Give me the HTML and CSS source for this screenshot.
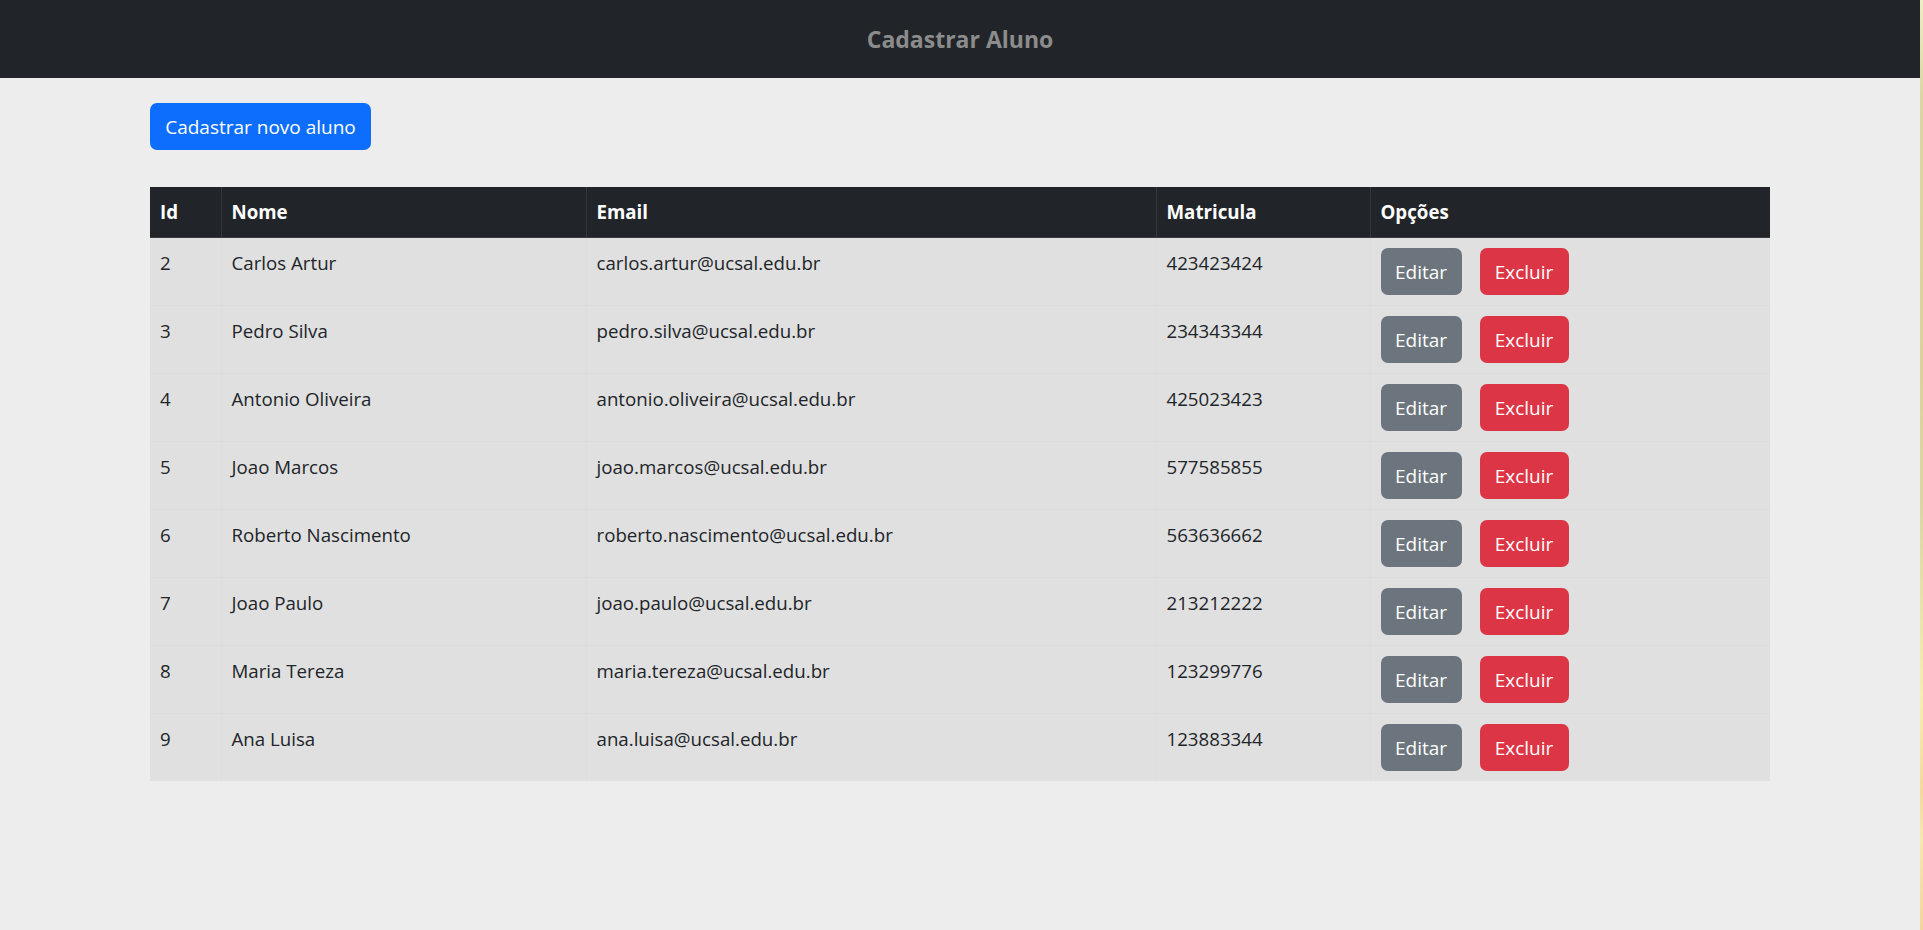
FILE: index.html
```html
<!DOCTYPE html>
<html lang="pt-BR">
<head>
<meta charset="utf-8">
<title>Cadastrar Aluno</title>
<link rel="stylesheet" href="styles.css">
</head>
<body>
<div class="page">
  <div class="main">
    <header class="topbar"><h1 class="brand">Cadastrar Aluno</h1></header>
    <div class="content">
      <button class="btn btn-primary">Cadastrar novo aluno</button>
      <table class="grid">
        <colgroup>
          <col class="c-id"><col class="c-nome"><col class="c-email"><col class="c-mat"><col class="c-opt">
        </colgroup>
        <thead>
          <tr><th>Id</th><th>Nome</th><th>Email</th><th>Matricula</th><th>Opções</th></tr>
        </thead>
        <tbody>
          <tr><td>2</td><td>Carlos Artur</td><td>carlos.artur@ucsal.edu.br</td><td>423423424</td><td class="opts"><button class="btn btn-secondary">Editar</button><button class="btn btn-danger">Excluir</button></td></tr>
          <tr><td>3</td><td>Pedro Silva</td><td>pedro.silva@ucsal.edu.br</td><td>234343344</td><td class="opts"><button class="btn btn-secondary">Editar</button><button class="btn btn-danger">Excluir</button></td></tr>
          <tr><td>4</td><td>Antonio Oliveira</td><td>antonio.oliveira@ucsal.edu.br</td><td>425023423</td><td class="opts"><button class="btn btn-secondary">Editar</button><button class="btn btn-danger">Excluir</button></td></tr>
          <tr><td>5</td><td>Joao Marcos</td><td>joao.marcos@ucsal.edu.br</td><td>577585855</td><td class="opts"><button class="btn btn-secondary">Editar</button><button class="btn btn-danger">Excluir</button></td></tr>
          <tr><td>6</td><td>Roberto Nascimento</td><td>roberto.nascimento@ucsal.edu.br</td><td>563636662</td><td class="opts"><button class="btn btn-secondary">Editar</button><button class="btn btn-danger">Excluir</button></td></tr>
          <tr><td>7</td><td>Joao Paulo</td><td>joao.paulo@ucsal.edu.br</td><td>213212222</td><td class="opts"><button class="btn btn-secondary">Editar</button><button class="btn btn-danger">Excluir</button></td></tr>
          <tr><td>8</td><td>Maria Tereza</td><td>maria.tereza@ucsal.edu.br</td><td>123299776</td><td class="opts"><button class="btn btn-secondary">Editar</button><button class="btn btn-danger">Excluir</button></td></tr>
          <tr><td>9</td><td>Ana Luisa</td><td>ana.luisa@ucsal.edu.br</td><td>123883344</td><td class="opts"><button class="btn btn-secondary">Editar</button><button class="btn btn-danger">Excluir</button></td></tr>
        </tbody>
      </table>
    </div>
  </div>
  <div class="edge"></div>
</div>
</body>
</html>
```

FILE: styles.css
```css
html, body {
  margin: 0;
  padding: 0;
  height: 100%;
}
body {
  background: #ededed;
  font-family: "Open Sans", "Noto Sans", sans-serif;
  font-size: 18.7px;
  color: #212529;
}
.page {
  display: flex;
  min-height: 930px;
}
.main {
  flex: 1;
  display: flex;
  flex-direction: column;
}
.edge {
  width: 3px;
  background: linear-gradient(to bottom, #eeeec4 0%, #dcd6a4 10%, #dcd19c 40%, #dcd6a4 55%, #f6eeb0 75%, #f5d89c 85%, #f6e8b0 90%, #f4d49c 100%);
}
.topbar {
  height: 78px;
  background: #212529;
  display: flex;
  align-items: center;
  justify-content: center;
}
.brand {
  margin: 0;
  font-size: 23px;
  font-weight: 700;
  color: #8c8c8c;
}
.content {
  padding: 25px 0 0 150px;
  display: flex;
  flex-direction: column;
  align-items: flex-start;
  gap: 37px;
}
.btn {
  font-family: inherit;
  font-size: 19px;
  line-height: 30px;
  height: 47px;
  padding: 0;
  border: 1px solid transparent;
  border-radius: 7px;
  color: #fff;
  cursor: pointer;
}
.btn-primary { background: #0d6efd; width: 221px; }
.btn-secondary { background: #6c757d; width: 81px; }
.btn-danger { background: #dc3545; width: 89px; }
.grid {
  width: 1620px;
  border-collapse: collapse;
  table-layout: fixed;
}
.c-id { width: 71px; }
.c-nome { width: 365px; }
.c-email { width: 570px; }
.c-mat { width: 214px; }
.c-opt { width: 400px; }
.grid th {
  background: #212529;
  color: #fff;
  font-weight: 700;
  text-align: left;
  padding: 10px 10px;
  line-height: 30px;
  border-left: 1px solid #32383e;
  border-bottom: 1px solid #373b3e;
}
.grid th:first-child { border-left: none; }
.grid td {
  background: #e0e0e0;
  padding: 10px 10px;
  line-height: 30px;
  vertical-align: top;
  border-left: 1px solid #dddddd;
  border-bottom: 1px solid #dcdcdc;
}
.grid td:first-child { border-left: none; }
.grid tr:last-child td { border-bottom: none; }
.grid td.opts {
  padding: 10px 10px 10px 10px;
}
.opts .btn + .btn {
  margin-left: 18px;
}
```
